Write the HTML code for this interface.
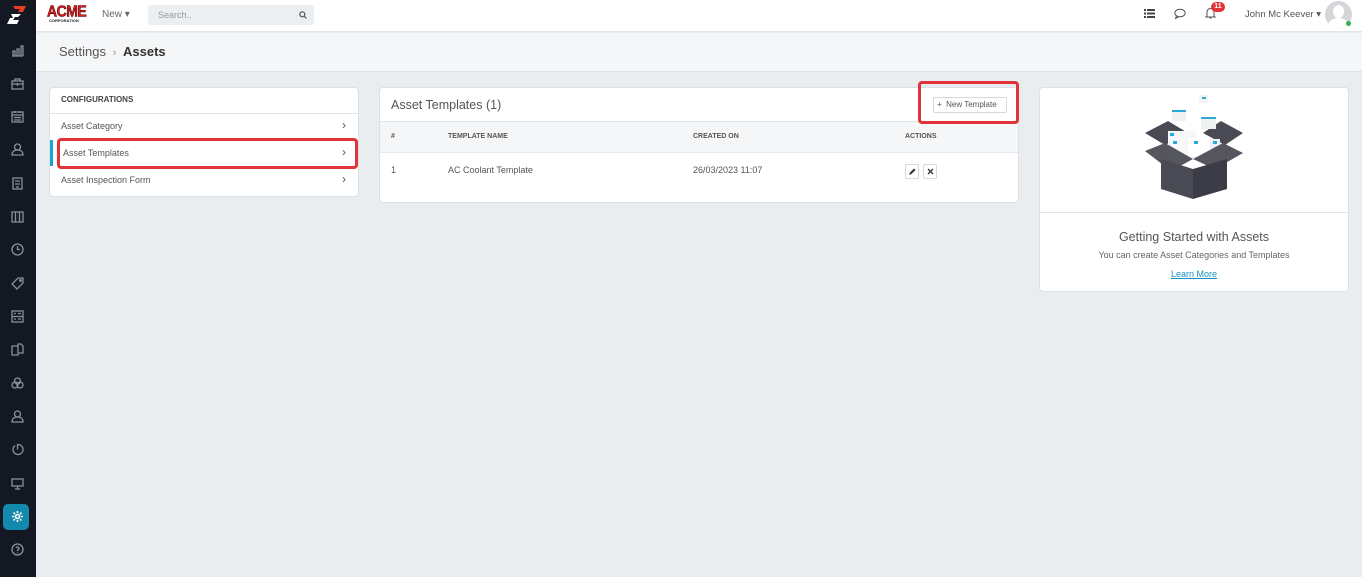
<!DOCTYPE html>
<html><head><meta charset="utf-8"><style>
*{box-sizing:border-box;margin:0;padding:0}
body{width:1362px;height:577px;overflow:hidden;background:#eaedf0;font-family:"Liberation Sans",sans-serif;position:relative;color:#444}
.a{position:absolute}
.sb{left:0;top:0;width:36px;height:577px;background:#141823}
.ic{position:absolute;left:11px;width:13px;height:13px}
.top{left:36px;top:0;width:1326px;height:32px;background:#fff;border-bottom:1px solid #e2e5e8}
.bc{left:36px;top:33px;width:1326px;height:39px;background:#f4f6f7;border-bottom:1px solid #dfe2e5}
.card{background:#fff;border:1px solid #dde1e5;border-radius:4px}
.red{border:3px solid #e0333a;border-radius:4px}
.t{position:absolute;white-space:nowrap}
</style></head><body>
<div class="a sb">
<svg class="a" style="left:6px;top:5px" width="22" height="20" viewBox="0 0 22 20"><polygon points="7,1 20,1 17,7 12,7 14,4 9,4" fill="#ee3b24"/><polygon points="5,9 15,9 12,12 9,12 7,15 13,15 11,19 1,19 4,13 7,13" fill="#fff"/></svg>
<svg class="ic" style="top:44px" viewBox="0 0 13 13" fill="none" stroke="#8a909a" stroke-width="1.3"><path d="M1 12h11M2 12V7h2v5M6 12V5h2v7M10 12V2h2v10"/></svg>
<svg class="ic" style="top:77px" viewBox="0 0 13 13" fill="none" stroke="#8a909a" stroke-width="1.3"><rect x="1" y="4" width="11" height="8"/><path d="M4 4V2h5v2M1 7h11M6.5 6v3"/></svg>
<svg class="ic" style="top:110px" viewBox="0 0 13 13" fill="none" stroke="#8a909a" stroke-width="1.3"><rect x="1" y="2" width="11" height="10"/><path d="M1 5h11M4 1v2M9 1v2M3 7.5h7M3 10h7"/></svg>
<svg class="ic" style="top:143px" viewBox="0 0 13 13" fill="none" stroke="#8a909a" stroke-width="1.3"><circle cx="6.5" cy="4" r="3"/><path d="M1 12c0-3 2-5 5.5-5s5.5 2 5.5 5z"/></svg>
<svg class="ic" style="top:177px" viewBox="0 0 13 13" fill="none" stroke="#8a909a" stroke-width="1.3"><rect x="2" y="1" width="9" height="11"/><path d="M4 4h5M4 7h5M5 10h3"/></svg>
<svg class="ic" style="top:210px" viewBox="0 0 13 13" fill="none" stroke="#8a909a" stroke-width="1.3"><path d="M1 2h11v10H1zM4.5 2v10M8.5 2v10"/></svg>
<svg class="ic" style="top:243px" viewBox="0 0 13 13" fill="none" stroke="#8a909a" stroke-width="1.3"><circle cx="6.5" cy="6.5" r="5.5"/><path d="M6.5 3v3.5h2.5"/></svg>
<svg class="ic" style="top:277px" viewBox="0 0 13 13" fill="none" stroke="#8a909a" stroke-width="1.3"><path d="M7 1h5v5l-6 6-5-5z"/><circle cx="9.5" cy="3.5" r="0.8"/></svg>
<svg class="ic" style="top:310px" viewBox="0 0 13 13" fill="none" stroke="#8a909a" stroke-width="1.3"><rect x="1" y="1" width="11" height="11"/><path d="M1 6.5h11M3 3.5h2M7 3.5h3M3 9h2M7 9h3"/></svg>
<svg class="ic" style="top:343px" viewBox="0 0 13 13" fill="none" stroke="#8a909a" stroke-width="1.3"><path d="M1 3h6v9H1zM7 5V1h3l2 2v7H7"/></svg>
<svg class="ic" style="top:377px" viewBox="0 0 13 13" fill="none" stroke="#8a909a" stroke-width="1.3"><circle cx="4" cy="8" r="3"/><circle cx="9" cy="8" r="3"/><circle cx="6.5" cy="4" r="3"/></svg>
<svg class="ic" style="top:410px" viewBox="0 0 13 13" fill="none" stroke="#8a909a" stroke-width="1.3"><circle cx="6.5" cy="4" r="3"/><path d="M1 12c0-3 2-5 5.5-5s5.5 2 5.5 5z"/></svg>
<svg class="ic" style="top:443px" viewBox="0 0 13 13" fill="none" stroke="#8a909a" stroke-width="1.3"><path d="M4 2.5A5 5 0 1 0 6.5 1.5v5"/></svg>
<svg class="ic" style="top:477px" viewBox="0 0 13 13" fill="none" stroke="#8a909a" stroke-width="1.3"><rect x="1" y="2" width="11" height="7"/><path d="M6.5 9v3M4 12h5"/></svg>
<div class="a" style="left:3px;top:504px;width:26px;height:26px;background:#1289ad;border-radius:5px"></div>
<svg class="ic" style="top:510px" viewBox="0 0 13 13" fill="none" stroke="#fff" stroke-width="1.6"><circle cx="6.5" cy="6.5" r="2"/><path d="M6.5 1v2M6.5 10v2M1 6.5h2M10 6.5h2M2.6 2.6l1.4 1.4M9 9l1.4 1.4M2.6 10.4L4 9M9 4l1.4-1.4"/></svg>
<svg class="ic" style="top:543px" viewBox="0 0 13 13" fill="none" stroke="#8a909a" stroke-width="1.3"><circle cx="6.5" cy="6.5" r="5.5"/><path d="M5 5a1.5 1.5 0 1 1 1.5 2v1M6.5 9.5v1"/></svg>
</div>
<div class="a top"></div>
<div class="t" style="left:47px;top:3px;font:bold 14px 'Liberation Sans';color:#e02020;letter-spacing:-0.5px;-webkit-text-stroke:0.5px #400;transform:scaleY(1.1)">ACME</div>
<div class="t" style="left:49px;top:18px;font:bold 4px 'Liberation Sans';color:#222">CORPORATION</div>
<div class="t" style="left:102px;top:9px;font-size:10px;color:#666">New ▾</div>
<div class="a" style="left:148px;top:5px;width:166px;height:20px;background:#eceff1;border-radius:2px"></div>
<div class="t" style="left:158px;top:10px;font-size:9px;color:#999">Search..</div>
<svg class="a" style="left:299px;top:11px" width="8" height="8" viewBox="0 0 8 8" fill="none" stroke="#555" stroke-width="1.2"><circle cx="3.3" cy="3.3" r="2.5"/><path d="M5 5l2.5 2.5"/></svg>
<svg class="a" style="left:1144px;top:9px" width="11" height="9" viewBox="0 0 11 9" fill="#444"><rect x="0" y="0" width="2" height="2"/><rect x="3" y="0" width="8" height="2"/><rect x="0" y="3.5" width="2" height="2"/><rect x="3" y="3.5" width="8" height="2"/><rect x="0" y="7" width="2" height="2"/><rect x="3" y="7" width="8" height="2"/></svg>
<svg class="a" style="left:1174px;top:8px" width="12" height="11" viewBox="0 0 12 11" fill="none" stroke="#555" stroke-width="1"><ellipse cx="6" cy="5" rx="5.2" ry="3.8"/><path d="M2.5 8l-1 2.5 3-1.5"/></svg>
<svg class="a" style="left:1205px;top:7px" width="11" height="12" viewBox="0 0 11 12" fill="none" stroke="#555" stroke-width="1"><path d="M2 9V5a3.5 3.5 0 0 1 7 0v4l1 1H1zM4.5 11h2"/></svg>
<div class="a" style="left:1211px;top:2px;width:14px;height:10px;background:#e5333a;border-radius:5px;color:#fff;font:bold 7px 'Liberation Sans';text-align:center;line-height:10px">11</div>
<div class="t" style="left:1245px;top:9px;font-size:9.5px;color:#555">John Mc Keever ▾</div>
<div class="a" style="left:1325px;top:1px;width:27px;height:27px;border-radius:50%;background:#d4d6d9;overflow:hidden"><div class="a" style="left:8px;top:4px;width:11px;height:13px;border-radius:50%;background:#fff"></div><div class="a" style="left:3px;top:17px;width:21px;height:16px;border-radius:50%;background:#fff"></div></div>
<div class="a" style="left:1346px;top:21px;width:5px;height:5px;border-radius:50%;background:#2bb24c"></div>
<div class="a bc"></div>
<div class="t" style="left:59px;top:44px;font-size:13px;color:#555">Settings <span style="color:#999;font-size:11px">&nbsp;›&nbsp;</span> <b style="color:#333">Assets</b></div>

<div class="a card" style="left:49px;top:87px;width:310px;height:110px"></div>
<div class="t" style="left:61px;top:95px;font:bold 8px 'Liberation Sans';color:#444">CONFIGURATIONS</div>
<div class="a" style="left:50px;top:113px;width:308px;height:1px;background:#e1e4e7"></div>
<div class="t" style="left:61px;top:121px;font-size:9px;color:#555">Asset Category</div>
<div class="t" style="left:342px;top:118px;font-size:12px;color:#555">›</div>
<div class="a" style="left:50px;top:140px;width:3px;height:26px;background:#13a8d8"></div>
<div class="a red" style="left:57px;top:138px;width:301px;height:31px"></div>
<div class="t" style="left:63px;top:148px;font-size:9px;color:#555">Asset Templates</div>
<div class="t" style="left:342px;top:145px;font-size:12px;color:#555">›</div>
<div class="t" style="left:61px;top:175px;font-size:9px;color:#555">Asset Inspection Form</div>
<div class="t" style="left:342px;top:172px;font-size:12px;color:#555">›</div>

<div class="a card" style="left:379px;top:87px;width:640px;height:116px"></div>
<div class="t" style="left:391px;top:98px;font-size:12.5px;color:#555">Asset Templates (1)</div>
<div class="a" style="left:380px;top:121px;width:638px;height:32px;background:#f4f6f7;border-top:1px solid #e1e4e7;border-bottom:1px solid #e6e9ec"></div>
<div class="t" style="left:391px;top:133px;font:bold 7px 'Liberation Sans';color:#555">#</div>
<div class="t" style="left:448px;top:133px;font:bold 7px 'Liberation Sans';color:#555">TEMPLATE NAME</div>
<div class="t" style="left:693px;top:133px;font:bold 7px 'Liberation Sans';color:#555">CREATED ON</div>
<div class="t" style="left:905px;top:133px;font:bold 7px 'Liberation Sans';color:#555">ACTIONS</div>
<div class="t" style="left:391px;top:165px;font-size:9px;color:#555">1</div>
<div class="t" style="left:448px;top:165px;font-size:9px;color:#555">AC Coolant Template</div>
<div class="t" style="left:693px;top:165px;font-size:9px;color:#555">26/03/2023 11:07</div>
<div class="a" style="left:905px;top:164px;width:14px;height:15px;border:1px solid #d5d9dd;border-radius:2px;background:#fff"></div>
<svg class="a" style="left:908px;top:168px" width="8" height="8" viewBox="0 0 8 8"><path d="M1 7l1-2.5L6 .5l1.5 1.5-4 4z" fill="#333"/></svg>
<div class="a" style="left:923px;top:164px;width:14px;height:15px;border:1px solid #d5d9dd;border-radius:2px;background:#fff"></div>
<svg class="a" style="left:927px;top:168px" width="7" height="7" viewBox="0 0 7 7" stroke="#333" stroke-width="1.3"><path d="M1 1l5 5M6 1l-5 5"/></svg>
<div class="a red" style="left:918px;top:81px;width:101px;height:43px"></div>
<div class="a" style="left:933px;top:97px;width:74px;height:16px;border:1px solid #d5d9dd;border-radius:2px;background:#fff"></div>
<div class="t" style="left:937px;top:100px;font-size:8px;color:#555">+&nbsp; New Template</div>

<div class="a card" style="left:1039px;top:87px;width:310px;height:205px"></div>
<div class="a" style="left:1040px;top:212px;width:308px;height:1px;background:#e1e4e7"></div>
<svg class="a" style="left:1143px;top:93px" width="102" height="106" viewBox="0 0 102 106">
<rect x="56" y="2" width="9" height="8" fill="#f1f3f5"/><rect x="59" y="4" width="4" height="2" fill="#2aa8d8"/>
<rect x="29" y="17" width="14" height="11" fill="#eef0f2"/><rect x="29" y="17" width="14" height="2" fill="#2aa8d8"/>
<polygon points="2,40 25,28 45,40 22,52" fill="#4a4a55"/>
<polygon points="60,40 78,28 100,40 82,52" fill="#4a4a55"/>
<rect x="58" y="24" width="15" height="12" fill="#eef0f2"/><rect x="58" y="24" width="15" height="2" fill="#2aa8d8"/>
<rect x="25" y="38" width="28" height="28" fill="#f6f7f8"/><rect x="27" y="40" width="4" height="3" fill="#2aa8d8"/>
<rect x="45" y="45" width="20" height="18" fill="#fff"/><rect x="51" y="48" width="4" height="3" fill="#2aa8d8"/>
<rect x="67" y="46" width="10" height="10" fill="#eef0f2"/><rect x="70" y="48" width="4" height="3" fill="#2aa8d8"/>
<rect x="30" y="48" width="4" height="3" fill="#2aa8d8"/>
<polygon points="2,58 22,50 50,66 28,78" fill="#55555f"/>
<polygon points="50,66 80,50 100,60 72,76" fill="#55555f"/>
<polygon points="18,66 50,76 50,106 18,96" fill="#4a4a55"/>
<polygon points="50,76 84,66 84,96 50,106" fill="#3c3c46"/>
</svg>
<div class="t" style="left:1040px;top:230px;width:308px;text-align:center;font-size:12.5px;color:#555">Getting Started with Assets</div>
<div class="t" style="left:1040px;top:250px;width:308px;text-align:center;font-size:9px;color:#666">You can create Asset Categories and Templates</div>
<div class="t" style="left:1040px;top:269px;width:308px;text-align:center;font-size:9px;color:#1a8fc4;text-decoration:underline">Learn More</div>
</body></html>
